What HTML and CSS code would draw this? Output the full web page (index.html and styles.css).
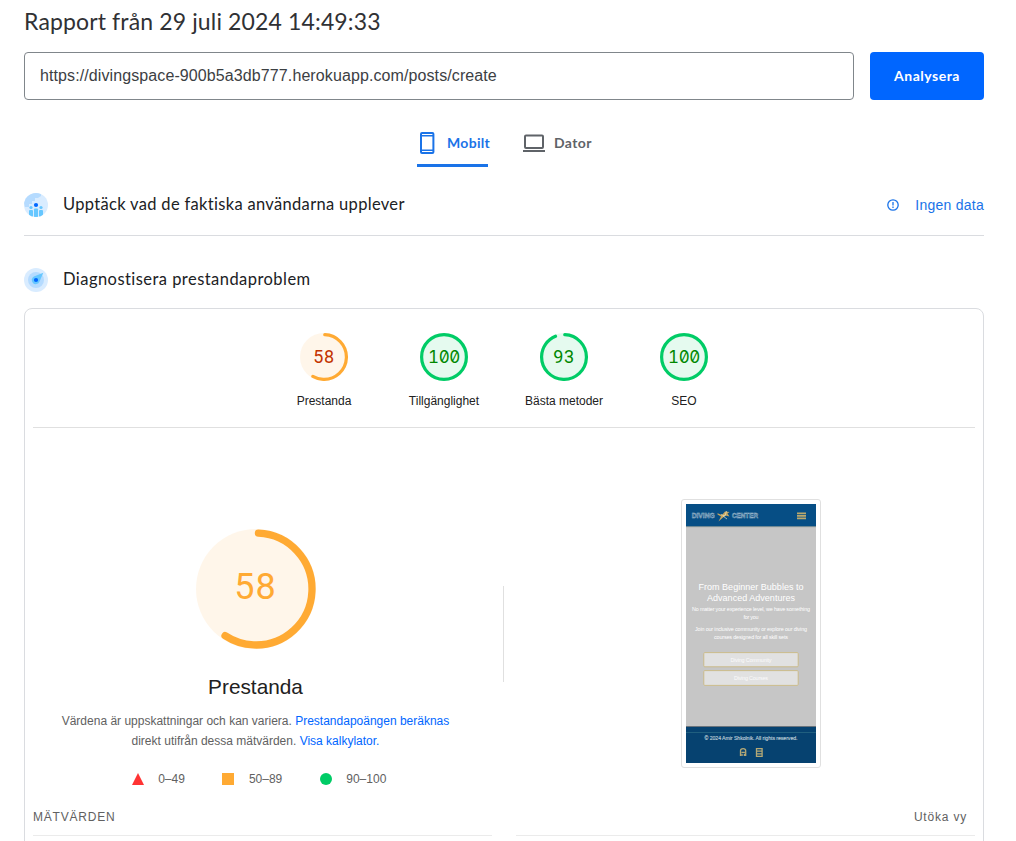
FILE: index.html
```html
<!DOCTYPE html>
<html lang="sv">
<head>
<meta charset="utf-8">
<title>PageSpeed Insights</title>
<link rel="stylesheet" href="styles.css">
</head>
<body>
<main class="page">
  <h1 class="title"><span>Rapport från 29 juli 2024 14:49:33</span></h1>
  <form class="search">
    <div class="url">https://divingspace-900b5a3db777.herokuapp.com/posts/create</div>
    <button class="analyze" type="button">Analysera</button>
  </form>
  <nav class="tabs">
    <a class="tab active">
      <svg width="16" height="22" viewBox="0 0 16 22" fill="none" stroke="currentColor" stroke-width="2"><rect x="2" y="1" width="12.4" height="20" rx="1"/><path d="M1 3.7h14M1 18.3h14" stroke-width="1.6"/></svg>
      <span>Mobilt</span>
    </a>
    <a class="tab">
      <svg width="22" height="18" viewBox="0 0 22 18" fill="none" stroke="currentColor" stroke-width="2"><rect x="2" y="1.5" width="18" height="12.5" rx="1"/><path d="M0 17h22"/></svg>
      <span>Dator</span>
    </a>
  </nav>
  <section class="row field">
    <svg class="badge" viewBox="0 0 24 24">
      <defs><clipPath id="disc"><circle cx="12" cy="12" r="12"/></clipPath></defs>
      <g clip-path="url(#disc)">
        <path fill="#d9ecff" d="M0 0h24v24H0z"/>
        <path fill="#b5dbff" d="M0 0h17v3l-3 2h-3v3H8v3H5v3H1L0 10z"/>
        <g fill="#66c7ff"><circle cx="7" cy="14.5" r="1.6"/><circle cx="17" cy="14.5" r="1.6"/><rect x="5" y="17" width="4" height="7" rx="1"/><rect x="10" y="15.5" width="4" height="9" rx="1"/><rect x="15" y="17" width="4" height="7" rx="1"/></g>
        <circle cx="12" cy="12" r="2.1" fill="#06f"/>
      </g>
    </svg>
    <h2 class="heading h-field">Upptäck vad de faktiska användarna upplever</h2>
    <a class="nodata">
      <svg width="12" height="12" viewBox="0 0 12 12" fill="none" stroke="currentColor" stroke-width="1.3"><circle cx="6" cy="6" r="5.2"/><path d="M6 3v3.5M6 7.6v1.3"/></svg>
      <span>Ingen data</span>
    </a>
  </section>
  <section class="row lab">
    <svg class="badge" viewBox="0 0 24 24"><circle cx="12" cy="12" r="12" fill="#d9ecff"/><circle cx="12" cy="12" r="8" fill="#b5dbff"/><path d="M19.3 4.8 15.3 14a4 4 0 1 1-5.4-5.4z" fill="#66c7ff"/><circle cx="12" cy="12" r="2.1" fill="#06f"/></svg>
    <h2 class="heading h-lab">Diagnostisera prestandaproblem</h2>
  </section>
  <article class="card">
    <div class="scores">
      <div class="score average">
        <div class="dial"><svg viewBox="0 0 120 120"><circle class="base" cx="60" cy="60" r="60"/><circle class="arc" cx="60" cy="60" r="56" stroke-dasharray="202 352" transform="rotate(-88 60 60)"/></svg><b>58</b></div>
        <span>Prestanda</span>
      </div>
      <div class="score pass">
        <div class="dial"><svg viewBox="0 0 120 120"><circle class="base" cx="60" cy="60" r="60"/><circle class="arc" cx="60" cy="60" r="56"/></svg><b class="full">100</b></div>
        <span>Tillgänglighet</span>
      </div>
      <div class="score pass">
        <div class="dial"><svg viewBox="0 0 120 120"><circle class="base" cx="60" cy="60" r="60"/><circle class="arc" cx="60" cy="60" r="56" stroke-dasharray="326 352" transform="rotate(-88 60 60)"/></svg><b>93</b></div>
        <span>Bästa metoder</span>
      </div>
      <div class="score pass">
        <div class="dial"><svg viewBox="0 0 120 120"><circle class="base" cx="60" cy="60" r="60"/><circle class="arc" cx="60" cy="60" r="56"/></svg><b class="full">100</b></div>
        <span>SEO</span>
      </div>
    </div>
    <div class="overview">
      <div class="summary average">
        <div class="dial big"><svg viewBox="0 0 120 120"><circle class="base" cx="60" cy="60" r="60"/><circle class="arc" cx="60" cy="60" r="56" stroke-dasharray="206 352" transform="rotate(-87.5 60 60)"/></svg><b>58</b></div>
        <h3>Prestanda</h3>
        <p><span>Värdena är uppskattningar och kan variera. <a>Prestandapoängen beräknas</a></span><br>direkt utifrån dessa mätvärden. <a>Visa kalkylator.</a></p>
        <div class="legend">
          <span><svg width="12" height="12"><path d="M6 0l6 12H0z" fill="#f33"/></svg>0–49</span>
          <span><svg width="12" height="12"><path d="M0 0h12v12H0z" fill="#fa3"/></svg>50–89</span>
          <span><svg width="12" height="12"><circle cx="6" cy="6" r="6" fill="#0c6"/></svg>90–100</span>
        </div>
      </div>
      <div class="separator"></div>
      <div class="preview">
        <div class="frame">
          <svg width="130" height="259" viewBox="0 0 130 259" font-family="Liberation Sans, Arial, sans-serif" text-anchor="middle">
            <path fill="#c6c6c6" d="M0 0h130v259H0z"/>
            <path fill="#064e85" d="M0 0h130v22.5H0z"/>
            <path d="M0 22.7h130" stroke="#7d8b83" stroke-width=".6"/>
            <g fill="none" stroke="#adc3d2" stroke-width=".45" font-size="6.7" font-weight="bold">
              <text x="17.2" y="14" textLength="23" lengthAdjust="spacingAndGlyphs">DIVING</text>
              <text x="59" y="14" textLength="26" lengthAdjust="spacingAndGlyphs">CENTER</text>
            </g>
            <path d="M31.5 9.2 36 11l3-3.5 4.5.5-2 1.5 2 3-4-1-2.5 2-4.5 4 2.5-5-3.5-2z" fill="#c5a661"/>
            <path d="M35 10.5l4 1.5 1.5-5M37 12l4 3" stroke="#efe3b9" stroke-width=".7" fill="none"/>
            <path d="M111 9.4h9M111 11.9h9M111 14.4h9" stroke="#b9a86d" stroke-width="1.7"/>
            <g fill="#fff">
              <text x="65" y="86.3" font-size="9" textLength="105">From Beginner Bubbles to</text>
              <text x="65" y="97.2" font-size="9" textLength="88">Advanced Adventures</text>
              <g font-size="5.4">
                <text x="65" y="107.3" textLength="118">No matter your experience level, we have something</text>
                <text x="65" y="114.8" textLength="15">for you</text>
                <text x="65" y="127.3" textLength="112">Join our inclusive community or explore our diving</text>
                <text x="65" y="134.8" textLength="74">courses designed for all skill sets</text>
              </g>
            </g>
            <g fill="#e1e1e1" stroke="#cbb982" stroke-width=".9"><rect x="17.8" y="148.6" width="94.4" height="14.2" rx="1"/><rect x="17.8" y="166.6" width="94.4" height="14.8" rx="1"/></g>
            <g fill="#fbfbfb" font-size="5.4"><text x="65" y="157.6" textLength="41">Diving Community</text><text x="65" y="175.6" textLength="34">Diving Courses</text></g>
            <path fill="#064270" d="M0 222.5h130V259H0z"/>
            <path d="M0 222.5h130" stroke="#696f74" stroke-width=".8"/>
            <path d="M0 228.5h130" stroke="#2c6c85" stroke-width=".7"/>
            <text x="65" y="236" font-size="5.2" stroke="#bdccd6" stroke-width=".15" fill="#bdccd6" textLength="93">© 2024 Amir Shkolnik. All rights reserved.</text>
            <g fill="none" stroke="#b5a976" stroke-width="1.3"><path d="M54.5 252v-5.2q0-2.2 2.6-2.2t2.6 2.2v5.2M55.5 248.3h3.4M56 252v-2.2M58.4 252v-2.2"/><path d="M70.5 244.7h5.6v7.6h-5.6zM70.5 247.2h5.6M70.5 249.8h5.6"/></g>
          </svg>
        </div>
      </div>
    </div>
    <div class="metrics-head"><span>MÄTVÄRDEN</span><span>Utöka vy</span></div>
    <div class="metrics"><div></div><div></div></div>
  </article>
</main>
</body>
</html>
```
FILE: styles.css
```css
* { box-sizing: border-box; }
body { margin: 0; background: #fff; font-family: "Liberation Sans", Arial, sans-serif; color: #212121; }
.page { width: 1016px; height: 841px; padding: 0 32px 0 24px; overflow: hidden; }
h1, h2, h3, p { margin: 0; font-weight: 400; }
.title { height: 52px; padding-top: 6px; font: 400 23px/30px Lato, sans-serif; letter-spacing: .14px; color: #303134; white-space: nowrap; }
.search { display: flex; gap: 16px; height: 48px; }
.url { flex: 1; padding-left: 15px; border: 1px solid #80868b; border-radius: 4px; font-size: 16px; line-height: 46px; letter-spacing: .1px; color: #3c4043; }
.analyze { width: 114px; padding: 0; border: 0; border-radius: 4px; background: #06f; color: #fff; font: 700 14px/48px Lato, sans-serif; letter-spacing: .5px; }
.tabs { display: flex; gap: 35px; height: 67px; padding: 19px 0 0 393px; }
.tab { display: flex; align-items: center; height: 48px; padding-top: 2px; gap: 9px; border-bottom: 3px solid transparent; color: #5f6368; font: 700 14px/20px Lato, sans-serif; letter-spacing: .4px; white-space: nowrap; }
.tab svg { flex: none; }
.tab.active { width: 71px; padding-left: 2px; gap: 12px; border-radius: 2px 2px 0 0; border-color: #1a73e8; color: #1a73e8; letter-spacing: .3px; }
.row { display: flex; align-items: center; }
.badge { width: 24px; height: 24px; margin-right: 15px; }
.heading { margin-top: -2px; font: 400 16.5px/24px Lato, sans-serif; color: #202124; white-space: nowrap; }
.h-field { letter-spacing: .32px; }
.h-lab { letter-spacing: .45px; }
.field { height: 69px; padding: 13px 0 6px; border-bottom: 1px solid #dadce0; }
.nodata { display: flex; align-items: center; gap: 16px; margin-left: auto; font-size: 14px; letter-spacing: .25px; color: #1a73e8; }
.lab { height: 72px; padding-top: 16px; }
.card { height: 560px; padding: 0 8px; border: 1px solid #dadce0; border-radius: 8px; }
.scores { display: flex; justify-content: center; height: 119px; padding-top: 24px; border-bottom: 1px solid #e0e0e0; }
.score { display: flex; flex-direction: column; align-items: center; width: 120px; font-size: 12px; line-height: 16px; gap: 12px; }
.dial { display: grid; width: 48px; height: 48px; place-items: center; }
.dial > * { grid-area: 1 / 1; }
.dial svg { width: 100%; height: 100%; }
.dial b { font: 400 18px/24px Roboto, sans-serif; letter-spacing: .7px; color: #c33300; }
.dial b.full { font: 400 17px/24px Inter, sans-serif; font-feature-settings: "zero" 1, "tnum" 1; letter-spacing: -.4px; }
.base { opacity: .1; }
.arc { fill: none; stroke-width: 8; stroke-linecap: round; }
.big .arc { stroke-width: 7.3; }
.average .base { fill: #fa3; }
.average .arc { stroke: #fa3; }
.pass .base { fill: #0c6; }
.pass .arc { stroke: #0c6; }
.pass .dial b { color: #080; }
.overview { display: flex; height: 367px; }
.summary { display: flex; flex-direction: column; align-items: center; width: 445px; padding-top: 100.5px; }
.dial.big { width: 120px; height: 120px; }
.dial.big b { padding-bottom: 3px; font-size: 36px; line-height: 40px; letter-spacing: 1px; color: #fa3; }
.summary h3 { margin-top: 24.5px; font-size: 20.8px; line-height: 28px; }
.summary p { margin-top: 10px; font-size: 12px; line-height: 20px; text-align: center; color: #616161; white-space: nowrap; }
.summary p a { color: #06f; }
.legend { display: flex; gap: 37.5px; margin: 18px 0 0 7px; font-size: 12px; line-height: 20px; color: #616161; }
.legend span { display: flex; align-items: center; gap: 14.5px; }
.separator { width: 1px; height: 96px; margin: 158px 0 0 25px; background: #e0e0e0; }
.preview { display: flex; flex: 1; justify-content: center; align-items: flex-start; padding: 71px 0 0 22px; }
.frame { width: 140px; height: 269px; padding: 4px; border: 1px solid #e0e0e0; border-radius: 3px; }
.frame svg { display: block; }
.metrics-head { display: flex; justify-content: space-between; height: 40px; padding: 12px 8px 0 0; font-size: 12px; line-height: 20px; letter-spacing: .8px; color: #616161; }
.metrics { display: grid; grid-template-columns: 459px 459px; justify-content: space-between; }
.metrics div { height: 20px; border-top: 1px solid #ebebeb; }
```
